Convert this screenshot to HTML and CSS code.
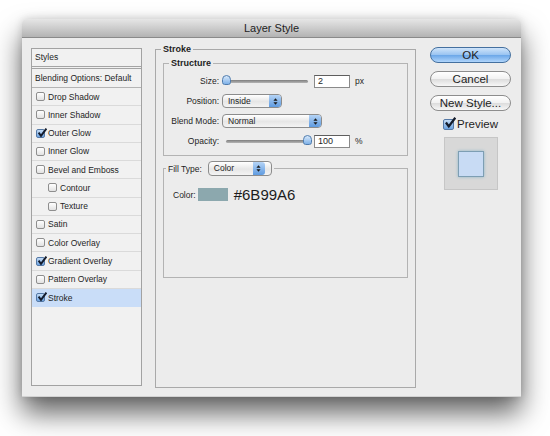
FILE: index.html
```html
<!DOCTYPE html>
<html lang="en">
<head>
    <meta charset="UTF-8">
    <title>Layer Style</title>
    <link rel="stylesheet" href="styles.css">
</head>
<body>
    <div class="screen">
        <div class="window">
            <div class="titlebar">Layer Style</div>
            <div class="dialog">
                <div class="styles-list">
                    <div class="list-head">Styles</div>
                    <div class="list-blend">Blending Options: Default</div>
                    <ul class="effects">
                        <li><span class="cb"></span>Drop Shadow</li>
                        <li><span class="cb"></span>Inner Shadow</li>
                        <li><span class="cb checked"><svg viewBox="0 0 10 10"><path d="M1.6 4.6 L4 7.8 L9.4 0.6"/></svg></span>Outer Glow</li>
                        <li><span class="cb"></span>Inner Glow</li>
                        <li><span class="cb"></span>Bevel and Emboss</li>
                        <li class="sub"><span class="cb"></span>Contour</li>
                        <li class="sub"><span class="cb"></span>Texture</li>
                        <li><span class="cb"></span>Satin</li>
                        <li><span class="cb"></span>Color Overlay</li>
                        <li><span class="cb checked"><svg viewBox="0 0 10 10"><path d="M1.6 4.6 L4 7.8 L9.4 0.6"/></svg></span>Gradient Overlay</li>
                        <li><span class="cb"></span>Pattern Overlay</li>
                        <li class="selected"><span class="cb checked"><svg viewBox="0 0 10 10"><path d="M1.6 4.6 L4 7.8 L9.4 0.6"/></svg></span>Stroke</li>
                    </ul>
                </div>

                <fieldset class="panel">
                    <legend>Stroke</legend>

                    <fieldset class="group structure">
                        <legend>Structure</legend>
                        <div class="row">
                            <label>Size:</label>
                            <div class="slider"><div class="track"></div><span class="thumb"></span></div>
                            <div class="field">2</div>
                            <span class="unit">px</span>
                        </div>
                        <div class="row">
                            <label>Position:</label>
                            <div class="popup pos">Inside<span class="arrows"><svg viewBox="0 0 6 10"><path d="M3 1 L5.5 4 H0.5 Z M3 9 L5.5 6 H0.5 Z"/></svg></span></div>
                        </div>
                        <div class="row">
                            <label>Blend Mode:</label>
                            <div class="popup blend">Normal<span class="arrows"><svg viewBox="0 0 6 10"><path d="M3 1 L5.5 4 H0.5 Z M3 9 L5.5 6 H0.5 Z"/></svg></span></div>
                        </div>
                        <div class="row">
                            <label>Opacity:</label>
                            <div class="slider"><div class="track"></div><span class="thumb end"></span></div>
                            <div class="field">100</div>
                            <span class="unit">%</span>
                        </div>
                    </fieldset>

                    <fieldset class="group fill">
                        <legend><span>Fill Type:</span><div class="popup type">Color<span class="arrows"><svg viewBox="0 0 6 10"><path d="M3 1 L5.5 4 H0.5 Z M3 9 L5.5 6 H0.5 Z"/></svg></span></div></legend>
                        <div class="color-row">
                            <label>Color:</label>
                            <span class="swatch"></span>
                            <span class="hex">#6B99A6</span>
                        </div>
                    </fieldset>
                </fieldset>

                <div class="actions">
                    <div class="btn default">OK</div>
                    <div class="btn">Cancel</div>
                    <div class="btn">New Style...</div>
                    <div class="preview-toggle">
                        <span class="cb big checked"><svg viewBox="0 0 10 10"><path d="M1.6 4.6 L4 7.8 L9.4 0.6"/></svg></span>Preview
                    </div>
                    <div class="preview-box"><span class="preview-square"></span></div>
                </div>
            </div>
        </div>
    </div>
</body>
</html>
```

FILE: styles.css
```css
body {
    margin: 0;
    background: #ffffff;
    font-family: "Liberation Sans", Arial, sans-serif;
    color: #1e1e1e;
}
.screen {
    height: 436px;
    box-sizing: border-box;
    padding: 19px 0 0 22px;
    overflow: hidden;
}
.window {
    width: 499px;
    height: 378px;
    background: #ececec;
    border-radius: 5px 5px 0 0;
    border-bottom: 1px solid #d2d2d2;
    box-sizing: border-box;
    box-shadow: 0 16px 28px rgba(0,0,0,0.62), 0 0 8px rgba(0,0,0,0.15);
    display: flex;
    flex-direction: column;
}
.titlebar {
    height: 19px;
    box-sizing: border-box;
    border-radius: 5px 5px 0 0;
    border-bottom: 1px solid #8a8a8a;
    background: linear-gradient(#e6e6e6, #b3b3b3);
    text-align: center;
    font-size: 11px;
    line-height: 19px;
    color: #222;
}
.dialog {
    display: flex;
    align-items: flex-start;
    padding: 6px 9px 0 9px;
}

/* styles list */
.styles-list {
    width: 111px;
    height: 338px;
    margin-top: 4px;
    box-sizing: border-box;
    border: 1px solid #a2a2a2;
    background: #f1f1f1;
    font-size: 8.5px;
}
.list-head {
    height: 17px;
    line-height: 17px;
    padding-left: 3px;
    border-bottom: 1px solid #a4a4a4;
}
.list-blend {
    height: 18px;
    line-height: 18px;
    margin-top: 1px;
    padding-left: 3px;
    border-top: 1px solid #a4a4a4;
    border-bottom: 1px solid #b4b4b4;
}
.effects {
    list-style: none;
    margin: 0;
    padding: 0;
}
.effects li {
    height: 17.27px;
    display: flex;
    align-items: center;
    padding-left: 4px;
    border-bottom: 1px solid #dadada;
}
.effects li.sub {
    padding-left: 16px;
}
.effects li.selected {
    background: #c9ddf8;
    border-bottom-color: #c9ddf8;
}
.cb {
    width: 9px;
    height: 9px;
    box-sizing: border-box;
    margin-right: 3px;
    border: 1px solid #8e8e8e;
    border-radius: 2px;
    background: linear-gradient(#ffffff, #e2e2e2);
    position: relative;
    flex: none;
}
.cb.checked {
    border-color: #5579a6;
    background: linear-gradient(#c4dcf6, #6ea4e2);
}
.cb svg {
    position: absolute;
    left: 0;
    top: -2px;
    width: 10px;
    height: 10px;
    fill: none;
    stroke: #141c2c;
    stroke-width: 1.9;
}

/* main panel */
.panel {
    width: 261px;
    height: 344px;
    box-sizing: border-box;
    margin: 0 0 0 13px;
    padding: 4px 7px 0 7px;
    border: 1px solid #a9a9a9;
    min-width: 0;
}
.panel > legend,
.structure > legend {
    padding: 0 2px;
    margin-left: -2px;
    font-size: 9px;
    line-height: 10px;
    font-weight: bold;
}
.group {
    margin: 0;
    box-sizing: border-box;
    border: 1px solid #b3b3b3;
    min-width: 0;
    font-size: 8.5px;
}
.structure {
    height: 98px;
    padding: 3px 7px 0 7px;
}
.row {
    height: 20px;
    display: flex;
    align-items: center;
}
.row label {
    width: 48px;
    margin-right: 3px;
    text-align: right;
    white-space: nowrap;
}
.slider {
    width: 90px;
    height: 10px;
    position: relative;
}
.track {
    margin: 4px 4px 0 4px;
    height: 3px;
    border-radius: 2px;
    background: linear-gradient(#7d7d7d, #b5b5b5);
}
.thumb {
    position: absolute;
    left: 0;
    top: -1px;
    width: 9px;
    height: 10px;
    box-sizing: border-box;
    border: 1px solid #4f7cae;
    border-radius: 5px 5px 3px 3px;
    background: linear-gradient(#d8e9fb, #7eb1e8);
}
.thumb.end {
    left: auto;
    right: 0;
}
.field {
    width: 36px;
    height: 13px;
    box-sizing: border-box;
    margin-left: 2px;
    padding-left: 3px;
    border: 1px solid #8a8a8a;
    border-top-color: #5e5e5e;
    background: #fff;
    font-size: 9px;
    line-height: 11px;
}
.unit {
    margin-left: 5px;
}
.popup {
    height: 14px;
    box-sizing: border-box;
    position: relative;
    padding-left: 5px;
    border: 1px solid #8c8c8c;
    border-radius: 4px;
    background: linear-gradient(#ffffff, #e6e6e6 55%, #f4f4f4);
    font-size: 8.5px;
    line-height: 12px;
    font-weight: normal;
}
.popup.pos {
    width: 60px;
}
.popup.blend {
    width: 100px;
}
.popup.type {
    width: 64px;
    height: 15px;
    line-height: 13px;
}
.arrows {
    position: absolute;
    right: 0;
    top: 0;
    bottom: 0;
    width: 12px;
    border-radius: 0 3px 3px 0;
    background: linear-gradient(#b5d4f6, #5f9be0);
    display: flex;
    align-items: center;
    justify-content: center;
}
.arrows svg {
    width: 5px;
    height: 9px;
    fill: #1a1a1a;
}
.fill {
    height: 117px;
    margin-top: 5px;
    padding: 0 9px 0 2px;
}
.fill > legend {
    display: flex;
    align-items: center;
    padding: 0 2px;
    font-size: 8.5px;
}
.fill > legend span {
    margin-right: 6px;
}
.color-row {
    display: flex;
    align-items: center;
    margin: 10px 0 0 7px;
}
.swatch {
    width: 30px;
    height: 13px;
    margin-left: 2px;
    background: #8ca8ae;
}
.hex {
    margin-left: 6px;
    font-size: 15px;
    color: #1c1c1c;
}

/* buttons */
.actions {
    width: 81px;
    margin: 3px 0 0 14px;
    display: flex;
    flex-direction: column;
    align-items: center;
}
.btn {
    width: 81px;
    height: 16px;
    box-sizing: border-box;
    margin-bottom: 8px;
    border: 1px solid #8d8d8d;
    border-radius: 8px;
    background: linear-gradient(#ffffff, #f1f1f1 50%, #dcdcdc 51%, #f7f7f7);
    text-align: center;
    font-size: 11.5px;
    line-height: 14px;
}
.btn.default {
    border-color: #44709f;
    background: linear-gradient(#cfe4fa, #98c3f1 50%, #6aa6e8 51%, #b0d5fb);
}
.preview-toggle {
    margin-top: -1px;
    display: flex;
    align-items: center;
    font-size: 11.5px;
}
.cb.big {
    width: 11px;
    height: 11px;
    margin-right: 3px;
}
.cb.big svg {
    width: 12px;
    height: 12px;
    top: -3px;
}
.preview-box {
    width: 54px;
    height: 53px;
    margin-top: 7px;
    box-sizing: border-box;
    border: 1px solid #c6c6c6;
    background: #d8d8d8;
    display: flex;
    align-items: center;
    justify-content: center;
}
.preview-square {
    width: 26px;
    height: 26px;
    box-sizing: border-box;
    border: 1px solid #7d9eb3;
    background: #c8dbf4;
    box-shadow: 0 0 3px #8fb6c8;
}
```
